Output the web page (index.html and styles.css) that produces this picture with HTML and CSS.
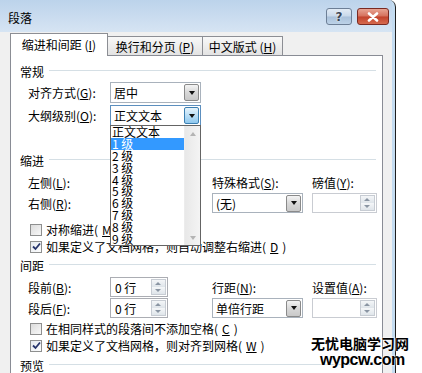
FILE: index.html
```html
<!DOCTYPE html>
<html lang="zh-CN">
<head>
  <meta charset="UTF-8" />
  <title>段落</title>
  <link rel="stylesheet" href="styles.css">
</head>
<body>
  <div class="window">
    <!-- 标题栏 -->
    <div class="titlebar">
      <span class="title">段落</span>
      <div class="caption-btns">
        <span class="cap-btn help">?</span>
        <span class="cap-btn close">
          <svg width="12" height="10" viewBox="0 0 12 10"><path d="M2 1.5 L10 8.5 M10 1.5 L2 8.5" stroke="#fff" stroke-width="2.6" stroke-linecap="round"/></svg>
        </span>
      </div>
    </div>

    <div class="client">
      <div class="tabs">
        <div class="tab active t1">缩进和间距 (<u>I</u>)</div>
        <div class="tab t2">换行和分页 (<u>P</u>)</div>
        <div class="tab t3">中文版式 (<u>H</u>)</div>
      </div>

      <div class="panel">
        <!-- 常规 -->
        <div class="group-title">常规</div>
        <div class="form general">
          <label>对齐方式(<u>G</u>):</label>
          <div class="combo"><span>居中</span><i class="drop"></i></div>
          <label>大纲级别(<u>O</u>):</label>
          <div class="combo focus">
            <span>正文文本</span><i class="drop"></i>
            <div class="listbox">
              <ul>
                <li>正文文本</li>
                <li class="sel">1 级</li>
                <li>2 级</li>
                <li>3 级</li>
                <li>4 级</li>
                <li>5 级</li>
                <li>6 级</li>
                <li>7 级</li>
                <li>8 级</li>
                <li>9 级</li>
              </ul>
              <div class="vscroll"><i class="up"></i><i class="down"></i></div>
            </div>
          </div>
        </div>

        <!-- 缩进 -->
        <div class="group-title">缩进</div>
        <div class="form grid4">
          <label>左侧(<u>L</u>):</label>
          <div class="spin"><span></span><i class="arrows"></i></div>
          <label>特殊格式(<u>S</u>):</label>
          <label>磅值(<u>Y</u>):</label>
          <label>右侧(<u>R</u>):</label>
          <div class="spin"><span></span><i class="arrows"></i></div>
          <div class="combo"><span>(无)</span><i class="drop"></i></div>
          <div class="spin wide disabled"><span></span><i class="arrows"></i></div>
        </div>
        <div class="check first"><i class="box"></i>对称缩进(<u>M</u>)</div>
        <div class="check"><i class="box on"><svg width="9" height="9" viewBox="0 0 9 9"><path d="M1 4.5 L3.5 7 L8 1.5" fill="none" stroke="#26346c" stroke-width="1.8"/></svg></i>如果定义了文档网格，则自动调整右缩进(<u>D</u>)</div>

        <!-- 间距 -->
        <div class="group-title">间距</div>
        <div class="form grid4">
          <label>段前(<u>B</u>):</label>
          <div class="spin"><span>0 行</span><i class="arrows"></i></div>
          <label>行距(<u>N</u>):</label>
          <label>设置值(<u>A</u>):</label>
          <label>段后(<u>F</u>):</label>
          <div class="spin"><span>0 行</span><i class="arrows"></i></div>
          <div class="combo"><span>单倍行距</span><i class="drop"></i></div>
          <div class="spin wide disabled"><span></span><i class="arrows"></i></div>
        </div>
        <div class="check tight"><i class="box"></i>在相同样式的段落间不添加空格(<u>C</u>)</div>
        <div class="check"><i class="box on"><svg width="9" height="9" viewBox="0 0 9 9"><path d="M1 4.5 L3.5 7 L8 1.5" fill="none" stroke="#26346c" stroke-width="1.8"/></svg></i>如果定义了文档网格，则对齐到网格(<u>W</u>)</div>

        <!-- 预览 -->
        <div class="group-title last">预览</div>
      </div>
    </div>
  </div>

  <div class="watermark">
    <div class="wm-cn">无忧电脑学习网</div>
    <div class="wm-en">wypcw.com</div>
  </div>
</body>
</html>
```

FILE: styles.css
```css
* {
  box-sizing: border-box;
}

body {
  margin: 0;
  width: 422px;
  height: 373px;
  overflow: hidden;
  background: #fff;
  font-family: "Noto Sans CJK SC", "DejaVu Sans", sans-serif;
  font-size: 12px;
  color: #000;
  position: relative;
}

u {
  text-decoration: underline;
  text-underline-offset: 1px;
}

.window {
  width: 396px;
  height: 373px;
  display: flex;
  flex-direction: column;
  background: #c4dcf1;
  border-right: 1px solid #1e1e1e;
  padding-right: 3px;
  border-top-right-radius: 7px;
  overflow: hidden;
}

/* 标题栏 */
.titlebar {
  height: 32px;
  display: flex;
  align-items: center;
  padding: 0 3px 0 8px;
  background: linear-gradient(#bcd3eb, #d6e4f3);
}

.title {
  padding-top: 2px;
}

.caption-btns {
  margin-left: auto;
  display: flex;
  gap: 5px;
  margin-top: 1px;
}

.cap-btn {
  height: 17px;
  border: 1px solid #6d7f96;
  border-radius: 3px;
  display: flex;
  align-items: center;
  justify-content: center;
}

.help {
  width: 26px;
  background: linear-gradient(#e2ebf5 0%, #c8d8ea 48%, #a9c0da 52%, #bdd2e8 100%);
  color: #3b4656;
  font-family: "DejaVu Sans", sans-serif;
  font-weight: bold;
  font-size: 12px;
  text-shadow: 0 0 2px #fff;
}

.close {
  width: 32px;
  border-color: #7a2a22;
  background: linear-gradient(#e8a493 0%, #d5705c 48%, #c2422c 52%, #d66a4e 100%);
}

/* 客户区 */
.client {
  flex: 1;
  display: flex;
  flex-direction: column;
  background: #f0f0f0;
  padding: 1px 9px 0 10px;
}

.tabs {
  display: flex;
  align-items: flex-end;
  height: 22px;
  padding-left: 1px;
  position: relative;
  z-index: 1;
}

.tab {
  height: 19px;
  display: flex;
  align-items: center;
  justify-content: center;
  border: 1px solid #8c8e94;
  border-bottom: none;
  border-left: none;
  background: linear-gradient(#f8f8f8, #e3e3e3);
  white-space: nowrap;
}

.tab.active {
  height: 23px;
  margin-bottom: -1px;
  padding-bottom: 2px;
  border-left: 1px solid #8c8e94;
  margin-left: -1px;
  background: #fff;
}

.t1 { width: 98px; }
.t2 { width: 95px; }
.t3 { width: 80px; }

.panel {
  flex: 1;
  background: #fff;
  border: 1px solid #898c95;
  border-bottom: none;
  padding: 7px 6px 0 9px;
}

.group-title {
  height: 16px;
  display: flex;
  align-items: center;
  gap: 5px;
}

.group-title::after {
  content: "";
  flex: 1;
  border-top: 1px solid #d5dfe5;
  margin-top: -2px;
}

.form {
  display: grid;
  padding-left: 8px;
  align-items: center;
}

.general {
  grid-template-columns: 82px 91px;
  grid-auto-rows: 21px;
  row-gap: 2px;
  margin: 3px 0 26px;
}

.grid4 {
  grid-template-columns: 82px 102px 100px 65px;
  grid-auto-rows: 20px;
  row-gap: 1px;
  margin-top: 4px;
}

label {
  white-space: nowrap;
}

/* 组合框 */
.combo {
  width: 91px;
  height: 100%;
  border: 1px solid #a9b2bc;
  background: #fff;
  display: flex;
  align-items: center;
  padding: 0 1px 0 3px;
  position: relative;
}

.combo span {
  flex: 1;
}

.drop {
  width: 15px;
  height: 17px;
  border: 1px solid #8a8a8a;
  border-radius: 2px;
  background: linear-gradient(#f4f4f4, #d8d8d8 50%, #c9c9c9);
  display: flex;
  align-items: center;
  justify-content: center;
}

.drop::after {
  content: "";
  border-left: 3.5px solid transparent;
  border-right: 3.5px solid transparent;
  border-top: 4px solid #111;
}

.combo.focus {
  border-color: #5c8fbf;
}

.combo.focus .drop {
  border-color: #3c7fb1;
  background: linear-gradient(#e6f3fb, #b9def6 50%, #8fc8ee);
}

/* 下拉列表 */
.listbox {
  position: absolute;
  left: -1px;
  top: 100%;
  width: 91px;
  height: 121px;
  border: 1px solid #646464;
  background: #fff;
  display: flex;
  z-index: 5;
}

.listbox ul {
  list-style: none;
  margin: 0;
  padding: 0;
  flex: 1;
}

.listbox li {
  height: 11.9px;
  line-height: 12px;
  padding-left: 1px;
  white-space: nowrap;
}

.listbox li.sel {
  background: #3399ff;
  color: #fff;
}

.vscroll {
  width: 16px;
  background: linear-gradient(90deg, #e8e8e8, #f4f4f4);
  border-left: 1px solid #ececec;
  display: flex;
  flex-direction: column;
  justify-content: space-between;
  align-items: center;
  padding: 6px 0 5px;
}

.vscroll .up {
  border-left: 3.5px solid transparent;
  border-right: 3.5px solid transparent;
  border-bottom: 4px solid #b4b4b4;
}

.vscroll .down {
  border-left: 3.5px solid transparent;
  border-right: 3.5px solid transparent;
  border-top: 4px solid #b4b4b4;
}

/* 微调框 */
.spin {
  width: 58px;
  height: 100%;
  border: 1px solid #abadb3;
  background: #fff;
  display: flex;
  align-items: center;
  padding: 0 1px 0 4px;
}

.spin.wide {
  width: 65px;
}

.spin.disabled {
  border-color: #c9ccd2;
}

.spin span {
  flex: 1;
}

.arrows {
  width: 15px;
  height: 16px;
  border: 1px solid #c7ccd3;
  background: linear-gradient(#f4f6f8, #dfe5ea 48%, #f4f6f8 52%, #dfe5ea);
  position: relative;
}

.arrows::before,
.arrows::after {
  content: "";
  position: absolute;
  left: 3px;
  border-left: 3.5px solid transparent;
  border-right: 3.5px solid transparent;
}

.arrows::before {
  top: 2px;
  border-bottom: 3px solid #8a95a3;
}

.arrows::after {
  bottom: 2px;
  border-top: 3px solid #8a95a3;
}

/* 复选框 */
.check {
  height: 17px;
  display: flex;
  align-items: center;
  gap: 4px;
  padding-left: 10px;
  white-space: nowrap;
}

.check.first {
  margin-top: 8px;
}

.check.tight {
  margin-top: 2px;
}

.box {
  width: 12px;
  height: 12px;
  border: 1px solid #8e8f8f;
  background: linear-gradient(135deg, #dcdcdc, #f8f8f8);
  display: flex;
  align-items: center;
  justify-content: center;
}

.box.on {
  background: linear-gradient(135deg, #e4e9ef, #fdfdfd);
}

.check + .group-title {
  margin-top: 2px;
}

.group-title.last {
  margin-top: 3px;
}

/* 水印 */
.watermark {
  position: absolute;
  left: 311px;
  top: 334px;
  font-weight: bold;
  color: #000;
  text-shadow: 0 0 2px #fff, 0 0 2px #fff;
}

.wm-cn {
  font-size: 14px;
  line-height: 18px;
}

.wm-en {
  font-family: "Liberation Sans", sans-serif;
  font-size: 16px;
  line-height: 16px;
  letter-spacing: -0.5px;
  padding-left: 9px;
}
```
